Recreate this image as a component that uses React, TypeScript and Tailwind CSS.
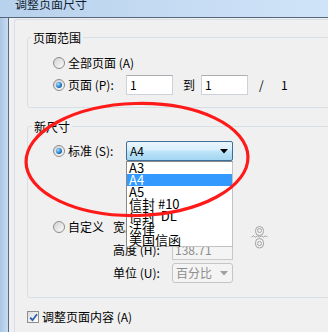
import React from 'react';

function Radio({ checked }: { checked?: boolean }) {
  return (
    <span className="flex h-[12px] w-[12px] shrink-0 items-center justify-center rounded-full border border-[#8b8b8b] bg-[linear-gradient(135deg,#d2d2d2,#fbfbfb)]">
      {checked && (
        <span className="h-[6px] w-[6px] rounded-full bg-[radial-gradient(circle_at_35%_35%,#a8e0ff,#1a74c4_60%,#0b4786)]" />
      )}
    </span>
  );
}

function Checkbox() {
  return (
    <span className="flex h-[12px] w-[12px] shrink-0 items-center justify-center border border-[#8e8f8f] bg-[linear-gradient(135deg,#dcdcdc,#ffffff)]">
      <svg width="9" height="9" viewBox="0 0 9 9">
        <path d="M1.2 4.6 L3.5 7.2 L8 1.2" stroke="#2b5fa8" strokeWidth="1.8" fill="none" />
      </svg>
    </span>
  );
}

function TextBox({ value, className = '' }: { value: string; className?: string }) {
  return (
    <div
      className={`flex h-[20px] w-[47px] items-center border border-[#cdd2d9] border-t-[#abadb3] bg-white pl-[3px] leading-[12px] ${className}`}
    >
      {value}
    </div>
  );
}

function DisabledBox({ value }: { value: string }) {
  return (
    <div className="flex h-[20px] w-[61px] items-center border border-[#c9c9c9] bg-[#f4f4f4] pl-[2px] text-[#8d8d8d]">
      {value}
    </div>
  );
}

function ChainIcon() {
  return (
    <svg width="17" height="23" viewBox="0 0 17 23" className="ml-[18px] mt-[9px] shrink-0">
      <g fill="none" stroke="#a3a3a3" strokeWidth="1">
        <rect x="4.5" y="0.5" width="8" height="9" rx="4" />
        <rect x="6.5" y="2.5" width="4" height="4" rx="2" />
        <polyline points="0.5,11 2.5,9.8 4.5,11.2 6.5,9.8 8.5,11.2 10.5,9.8 12.5,11.2 14.5,9.8 16.5,11" />
        <rect x="4.5" y="12.5" width="8" height="9.5" rx="4" />
        <rect x="6.5" y="15.5" width="4" height="4" rx="2" />
      </g>
    </svg>
  );
}

const sizes = ['A3', 'A4', 'A5', '信封 #10', '信封  DL', '法律', '美国信函'];

export default function App() {
  return (
    <div className="relative h-[332px] w-[328px] overflow-hidden bg-[#f0f0f0] font-['Noto_Sans_CJK_SC',sans-serif] text-[12px] text-black">
      {/* title bar */}
      <div className="h-[18px] overflow-hidden border-b border-[#56657a] bg-[linear-gradient(to_right,#b8d1ec,#d0e4f8)] pl-[15px]">
        <div className="-mt-[2px] leading-[12px] text-[#0f1d30]">调整页面尺寸</div>
      </div>

      <div className="flex h-[314px]">
        <div className="w-[9px] shrink-0 border-r border-[#5a6a7e] bg-[linear-gradient(to_right,#aac6e4,#c8dcf2)]" />

        <div className="flex-1 pl-[5px] pt-[1px]">
          <div className="h-full rounded-tl-[3px] border-l border-t border-[#d5dfe5] pl-[12px] pt-[11px]">
            {/* 页面范围 */}
            <fieldset className="w-[320px] rounded-[3px] border border-[#d5dfe5] pb-[12px] pt-[9px]">
              <legend className="ml-[3px] px-[2px] leading-[13px]">页面范围</legend>
              <div className="flex h-[20px] items-center gap-[3px] pl-[25px]">
                <Radio />
                <span>全部页面 (A)</span>
              </div>
              <div className="mt-[2px] flex h-[20px] items-center pl-[25px]">
                <Radio checked />
                <span className="ml-[3px] w-[58px]">页面 (P):</span>
                <TextBox value="1" />
                <span className="ml-[10px]">到</span>
                <TextBox value="1" className="ml-[6px]" />
                <span className="ml-[11px] w-[22px]">/</span>
                <span>1</span>
              </div>
            </fieldset>

            {/* 新尺寸 */}
            <fieldset className="mt-[12px] w-[320px] rounded-[3px] border border-[#d5dfe5] pb-[14px] pt-[8px]">
              <legend className="ml-[4px] px-[2px] leading-[13px]">新尺寸</legend>
              <div className="flex h-[20px] items-center pl-[25px]">
                <Radio checked />
                <span className="ml-[3px] w-[58px]">标准 (S):</span>
                <div className="relative z-10 h-[20px] w-[107px]">
                  <div className="flex h-full items-center justify-between rounded-[2px] border border-[#3f6f96] bg-[linear-gradient(to_bottom,#eaf6fd_0%,#d7effc_45%,#bde5f9_52%,#a3d5f1_100%)] pl-[3px] pr-[4px]">
                    <span>A4</span>
                    <svg width="8" height="5" viewBox="0 0 8 5">
                      <path d="M0 0 H8 L4 4.5 Z" fill="#000" />
                    </svg>
                  </div>
                  <div className="absolute left-0 top-[20px] w-[107px] border border-[#8a8a8a] border-r-[#c2c2c2] border-b-[#c2c2c2] bg-white">
                    {sizes.map((s) => (
                      <div
                        key={s}
                        className={`h-[12px] whitespace-pre pl-[2px] text-[13px] leading-[12px] ${
                          s === 'A4' ? 'bg-[#3399ff] text-white' : 'text-black'
                        }`}
                      >
                        {s}
                      </div>
                    ))}
                  </div>
                </div>
              </div>

              <div className="mt-[56px] flex items-start pl-[25px]">
                <div className="flex h-[20px] items-center">
                  <Radio />
                  <span className="ml-[3px] w-[45px]">自定义</span>
                </div>
                <div className="flex flex-col gap-[3px]">
                  <div className="flex h-[20px] items-center">
                    <span className="w-[59px]">宽度 (W):</span>
                    <DisabledBox value="100" />
                  </div>
                  <div className="flex h-[20px] items-center">
                    <span className="w-[59px]">高度 (H):</span>
                    <DisabledBox value="138.71" />
                  </div>
                  <div className="flex h-[20px] items-center">
                    <span className="w-[59px]">单位 (U):</span>
                    <div className="flex h-[20px] w-[61px] items-center justify-between rounded-[3px] border border-[#c5c5c5] bg-[#f4f4f4] pl-[3px] pr-[4px] text-[#8d8d8d]">
                      <span>百分比</span>
                      <svg width="8" height="5" viewBox="0 0 8 5">
                        <path d="M0 0 H8 L4 4.5 Z" fill="#a0a0a0" />
                      </svg>
                    </div>
                  </div>
                </div>
                <ChainIcon />
              </div>
            </fieldset>

            <div className="mt-[9px] flex h-[20px] items-center gap-[3px]">
              <Checkbox />
              <span>调整页面内容 (A)</span>
            </div>
          </div>
        </div>
      </div>

      {/* red annotation ellipse */}
      <svg className="pointer-events-none absolute left-0 top-0 z-20" width="328" height="332" viewBox="0 0 328 332">
        <ellipse
          cx="137"
          cy="159.5"
          rx="111"
          ry="56"
          transform="rotate(-1.5 137 159.5)"
          fill="none"
          stroke="#ff1a1a"
          strokeWidth="3.2"
        />
      </svg>
    </div>
  );
}
